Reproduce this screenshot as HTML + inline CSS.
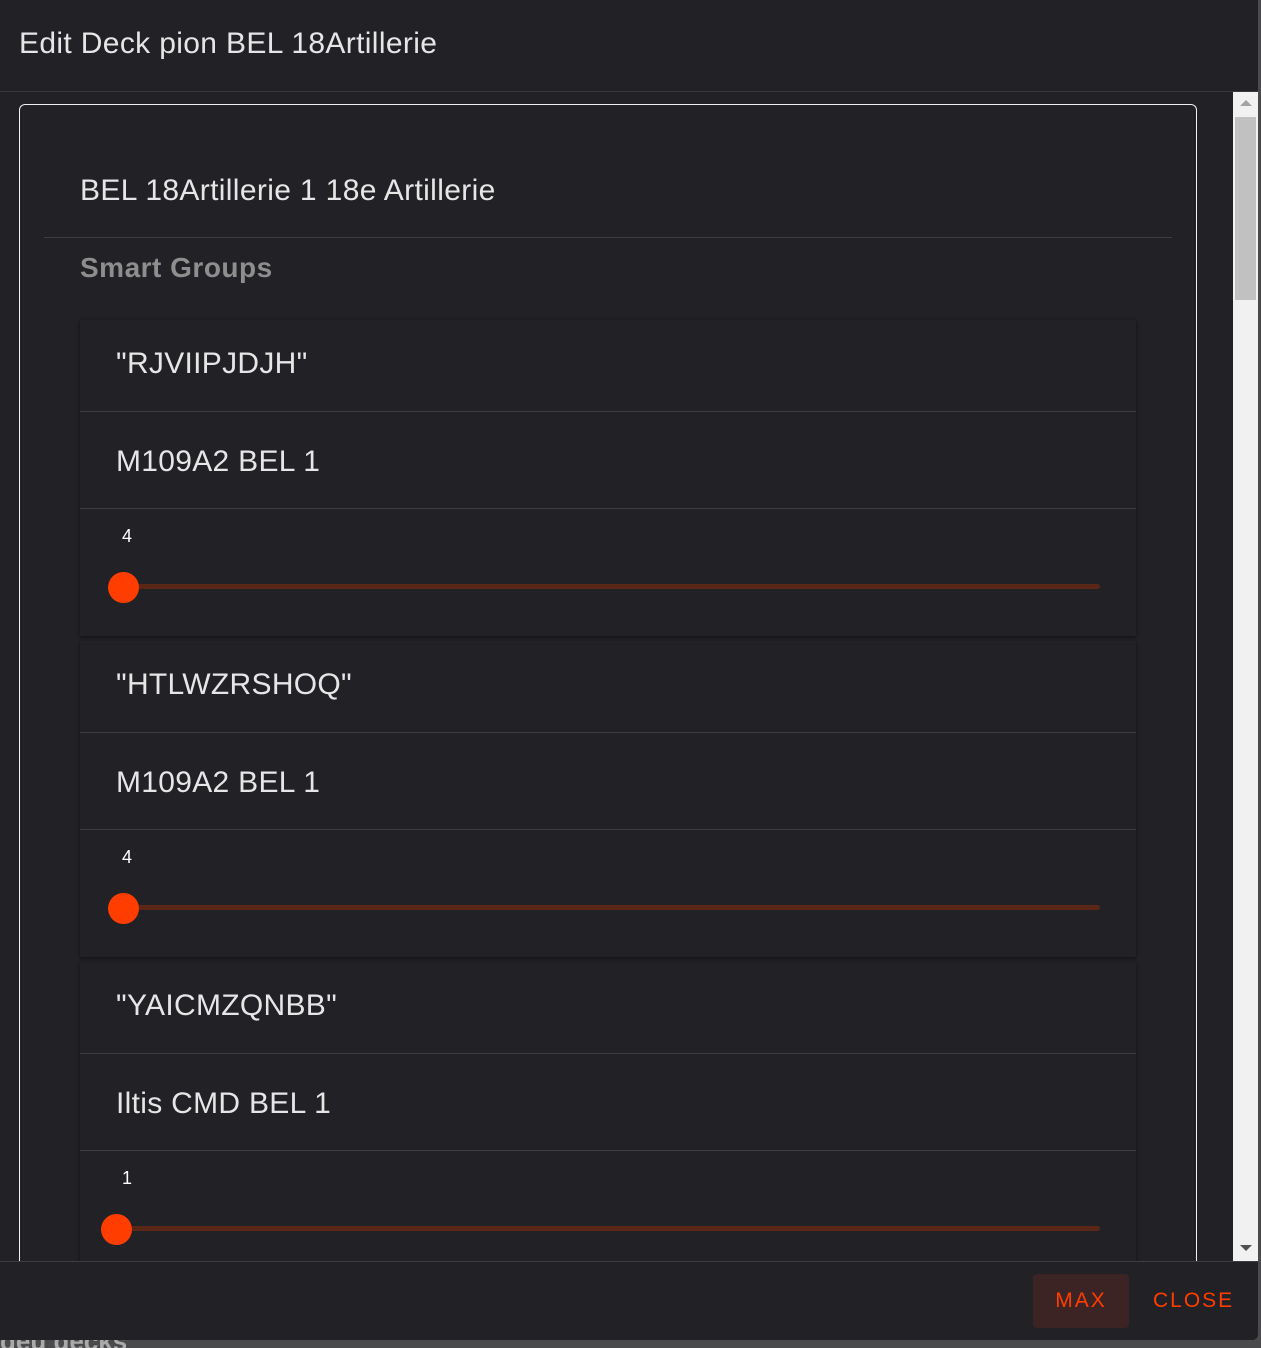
<!DOCTYPE html>
<html><head><meta charset="utf-8"><style>
*{margin:0;padding:0;box-sizing:border-box}
html,body{width:1261px;height:1348px;overflow:hidden}
body{background:#4a4a4d;font-family:"Liberation Sans",Arial,sans-serif;position:relative}
.dlg{position:absolute;left:0;top:0;width:1258px;height:1340px;background:#212126;border-radius:0 0 6px 0}
.abs{position:absolute}
.t{color:#e6e6e6;font-size:30px;letter-spacing:0.3px}
.line{position:absolute;height:1px;background:#3d3d42}
.grp{position:absolute;left:80px;width:1056px;height:316px;background:#212126;box-shadow:0 1px 3px rgba(0,0,0,.5)}
.track{position:absolute;left:123px;width:977px;height:5px;background:#5a2618;border-radius:3px}
.thumb{position:absolute;width:31px;height:31px;border-radius:50%;background:#ff3d00}
</style></head><body>
<div class="abs" style="left:0;top:1326px;font-size:26px;font-weight:bold;color:#aaa;">deu decks</div>
<div class="dlg">
<div class="abs t" style="left:19px;top:27px;letter-spacing:0.35px">Edit Deck pion BEL 18Artillerie</div>
<div class="line" style="left:0;top:91px;width:1258px;background:#38383d"></div>
<div class="abs" style="left:19px;top:104px;width:1178px;height:1200px;border:1.5px solid #f0f0f0;border-radius:6px"></div>
<div class="abs t" style="left:80px;top:174px;letter-spacing:0.35px">BEL 18Artillerie 1 18e Artillerie</div>
<div class="line" style="left:44px;top:237px;width:1128px"></div>
<div class="abs" style="left:80px;top:252px;font-size:28px;font-weight:bold;color:#8e8e8e;letter-spacing:0.5px">Smart Groups</div>

<div class="grp" style="top:320px"></div>
<div class="grp" style="top:641px"></div>
<div class="grp" style="top:962px"></div>

<div class="abs t" style="left:116px;top:347px;">"RJVIIPJDJH"</div>
<div class="line" style="left:80px;top:411px;width:1056px"></div>
<div class="abs t" style="left:116px;top:445px;">M109A2 BEL 1</div>
<div class="line" style="left:80px;top:508px;width:1056px"></div>
<div class="abs" style="left:122px;top:526px;font-size:18px;color:#fff">4</div>
<div class="track" style="top:584px"></div>
<div class="thumb" style="left:108px;top:572px"></div>

<div class="abs t" style="left:116px;top:668px;">"HTLWZRSHOQ"</div>
<div class="line" style="left:80px;top:732px;width:1056px"></div>
<div class="abs t" style="left:116px;top:766px;">M109A2 BEL 1</div>
<div class="line" style="left:80px;top:829px;width:1056px"></div>
<div class="abs" style="left:122px;top:847px;font-size:18px;color:#fff">4</div>
<div class="track" style="top:905px"></div>
<div class="thumb" style="left:108px;top:893px"></div>

<div class="abs t" style="left:116px;top:989px;">"YAICMZQNBB"</div>
<div class="line" style="left:80px;top:1053px;width:1056px"></div>
<div class="abs t" style="left:116px;top:1087px;">Iltis CMD BEL 1</div>
<div class="line" style="left:80px;top:1150px;width:1056px"></div>
<div class="abs" style="left:122px;top:1168px;font-size:18px;color:#fff">1</div>
<div class="track" style="top:1226px"></div>
<div class="thumb" style="left:101px;top:1214px"></div>

<div class="abs" style="left:1233px;top:92px;width:25px;height:1169px;background:#f1f1f1"></div>
<div class="abs" style="left:1235px;top:117px;width:21px;height:183px;background:#c1c1c1"></div>
<div class="abs" style="left:1240px;top:100px;width:0;height:0;border-left:6px solid transparent;border-right:6px solid transparent;border-bottom:6px solid #a3a3a3"></div>
<div class="abs" style="left:1240px;top:1245px;width:0;height:0;border-left:6px solid transparent;border-right:6px solid transparent;border-top:6px solid #505050"></div>

<div class="abs" style="left:0;top:1261px;width:1258px;height:79px;background:#212126;border-top:1px solid #3d3d42;border-radius:0 0 6px 0"></div>
<div class="abs" style="left:1033px;top:1274px;width:96px;height:54px;background:#3b2423;border-radius:4px"></div>
<div class="abs" style="left:1033px;top:1289px;width:96px;text-align:center;font-size:21px;letter-spacing:2px;color:#ff3d00">MAX</div>
<div class="abs" style="left:1153px;top:1289px;font-size:21px;letter-spacing:2px;color:#ff3d00">CLOSE</div>
</div>
</body></html>
